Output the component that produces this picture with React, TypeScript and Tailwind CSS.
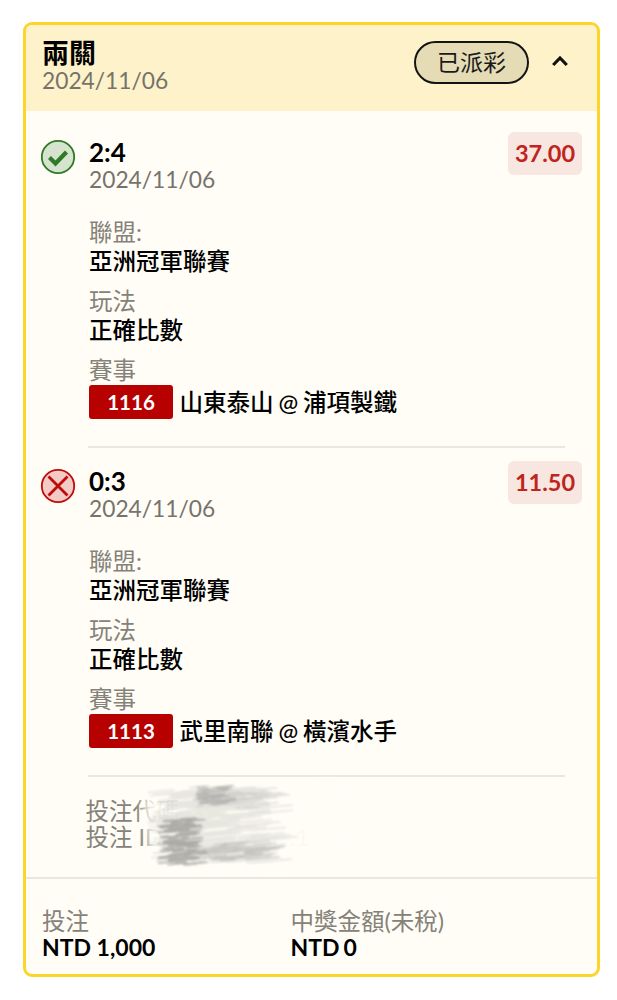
const CJK = "font-['Lato','Noto_Sans_CJK_TC',sans-serif]";

function Check() {
  return (
    <svg width="36" height="42" viewBox="0 0 36 42" className="shrink-0">
      <circle cx="18" cy="21" r="16.2" fill="#d6e3cf" stroke="#2f7a24" strokeWidth="1.8" />
      <path d="M9.5 21.5 L15.5 27.5 L26.5 16" fill="none" stroke="#2f7a24" strokeWidth="4.2" />
    </svg>
  );
}

function Cross() {
  return (
    <svg width="36" height="42" viewBox="0 0 36 42" className="shrink-0">
      <circle cx="18" cy="21" r="16.2" fill="#f2cbc6" stroke="#c00a0a" strokeWidth="1.8" />
      <path d="M8.5 11.5 L27.5 30.5 M27.5 11.5 L8.5 30.5" fill="none" stroke="#c00a0a" strokeWidth="2.8" />
    </svg>
  );
}

function Field({ label, value }: { label: string; value: string }) {
  return (
    <div className="mt-[11px] first:mt-0">
      <div className="text-[23.5px] leading-[29px] text-[#85827a]">{label}</div>
      <div className="text-[23.5px] leading-[29px] font-medium text-black">{value}</div>
    </div>
  );
}

function Selection(props: { icon: React.ReactNode; score: string; odds: string; code: string; match: string }) {
  return (
    <div className="flex">
      <div className="w-[49px] pt-[4px] -ml-[2px] shrink-0">{props.icon}</div>
      <div className="flex-1 min-w-0">
        <div className="flex justify-between items-start">
          <div>
            <div className="text-[26px] leading-[31px] font-bold text-black mt-[5px]">{props.score}</div>
            <div className="text-[22.75px] leading-[23px] text-[#75736c]">2024/11/06</div>
          </div>
          <div className="h-[43px] w-[74px] rounded-[6px] bg-[#f8e7e1] text-[#c0241c] font-bold text-[23.5px] flex items-center justify-center">
            {props.odds}
          </div>
        </div>
        <div className="mt-[27px]">
          <Field label="聯盟:" value="亞洲冠軍聯賽" />
          <Field label="玩法" value="正確比數" />
          <div className="mt-[11px]">
            <div className="text-[23.5px] leading-[29px] text-[#85827a]">賽事</div>
            <div className="flex items-center">
              <div className="w-[84px] h-[34px] rounded-[3px] bg-[#b70000] text-white text-[20.5px] font-bold flex items-center justify-center">
                {props.code}
              </div>
              <div className="ml-[6.5px] text-[23.5px] font-medium text-black leading-[34px] [word-spacing:-1px]">{props.match}</div>
            </div>
          </div>
        </div>
      </div>
    </div>
  );
}

function streaks(seed: number, n: number, x0: number, x1: number, y0: number, y1: number, len: number) {
  let s = seed;
  const r = () => {
    s = (s * 16807) % 2147483647;
    return s / 2147483647;
  };
  const out: string[] = [];
  for (let i = 0; i < n; i++) {
    const x = x0 + r() * (x1 - x0);
    const y = y0 + r() * (y1 - y0);
    const l = len * (0.5 + r());
    out.push(`M${x.toFixed(1)} ${y.toFixed(1)} L${(x + l).toFixed(1)} ${(y - l * 0.09).toFixed(1)}`);
  }
  return out.join(" ");
}

function Smudge() {
  return (
    <svg width="220" height="100" viewBox="0 0 220 100" className="absolute left-[104px] top-[664px]">
      <defs>
        <filter id="wash" x="-20%" y="-20%" width="140%" height="140%">
          <feGaussianBlur stdDeviation="5" />
        </filter>
        <filter id="soft" x="-10%" y="-10%" width="120%" height="120%">
          <feGaussianBlur stdDeviation="1.1" />
        </filter>
      </defs>
      <path d="M12 22 L205 6 L210 70 L160 92 L20 90 Z" fill="#fffdf6" opacity="0.9" filter="url(#wash)" />
      <g fill="none" strokeLinecap="round" filter="url(#soft)">
        <path d={streaks(11, 260, 18, 125, 16, 88, 30)} stroke="#c2c2bf" strokeWidth="1.6" opacity="0.4" />
        <path d={streaks(23, 50, 60, 130, 12, 34, 22)} stroke="#bcbcb9" strokeWidth="1.5" opacity="0.45" />
        <path d={streaks(37, 140, 28, 58, 44, 90, 14)} stroke="#717170" strokeWidth="1.6" opacity="0.5" />
        <path d={streaks(41, 50, 66, 88, 12, 30, 14)} stroke="#8f8f8d" strokeWidth="1.5" opacity="0.45" />
        <path d={streaks(53, 50, 62, 125, 68, 86, 24)} stroke="#a0a09e" strokeWidth="1.3" opacity="0.45" />
      </g>
    </svg>
  );
}

export default function App() {
  return (
    <div className={`${CJK} bg-white w-[617px] h-[1000px] pt-[22px] pl-[23px]`}>
      <div className="w-[577px] h-[955px] border-[3px] border-[#fdd42a] rounded-[9px] bg-[#fffdf6] overflow-hidden flex flex-col">
        <div className="h-[86px] shrink-0 bg-[#fdf2c9] pl-[16px] pr-[28px] flex items-start justify-between">
          <div className="pt-[13px]">
            <div className="text-[27px] leading-[30px] font-bold text-black">兩關</div>
            <div className="text-[22.75px] leading-[26px] text-[#75736c]">2024/11/06</div>
          </div>
          <div className="flex items-center mt-[16px]">
            <div className="w-[115px] h-[43px] rounded-full border-2 border-[#141414] bg-[#e5dcb5] text-[23px] text-[#1a1a1a] flex items-center justify-center">
              已派彩
            </div>
            <svg width="18" height="14" viewBox="0 0 18 14" className="ml-[22px] -mt-[4px]">
              <path d="M2.2 11 L9 4 L15.8 11" fill="none" stroke="#111" strokeWidth="3.2" />
            </svg>
          </div>
        </div>

        <div className="relative flex-1 flex flex-col">
          <div className="pl-[16px] pr-[15px] pt-[21px]">
            <Selection icon={<Check />} score="2:4" odds="37.00" code="1116" match="山東泰山 @ 浦項製鐵" />
            <div className="ml-[46px] mr-[17px] h-[2px] bg-[#e9e7df] mt-[27px] mb-[13px]" />
            <Selection icon={<Cross />} score="0:3" odds="11.50" code="1113" match="武里南聯 @ 橫濱水手" />
            <div className="ml-[46px] mr-[17px] h-[2px] bg-[#e9e7df] mt-[27px]" />
          </div>
          <div className="pl-[59.5px] pt-[21px] text-[23.5px] leading-[26px] text-[#85827a]">
            <div>投注代碼</div>
            <div>
              投注 ID<span className="ml-[127px] text-[#d5d3cb]">.1</span>
            </div>
          </div>

          <Smudge />

          <div className="mt-auto border-t-2 border-[#e9e7df] h-[97px] pl-[16px] pt-[29px] grid grid-cols-[248.5px_1fr]">
            <div>
              <div className="text-[23.5px] leading-[27px] text-[#85827a]">投注</div>
              <div className="text-[23px] leading-[24px] font-bold text-black">NTD 1,000</div>
            </div>
            <div>
              <div className="text-[23.5px] leading-[27px] text-[#85827a]">中獎金額(未稅)</div>
              <div className="text-[23px] leading-[24px] font-bold text-black [word-spacing:-1.5px]">NTD 0</div>
            </div>
          </div>
        </div>
      </div>
    </div>
  );
}
